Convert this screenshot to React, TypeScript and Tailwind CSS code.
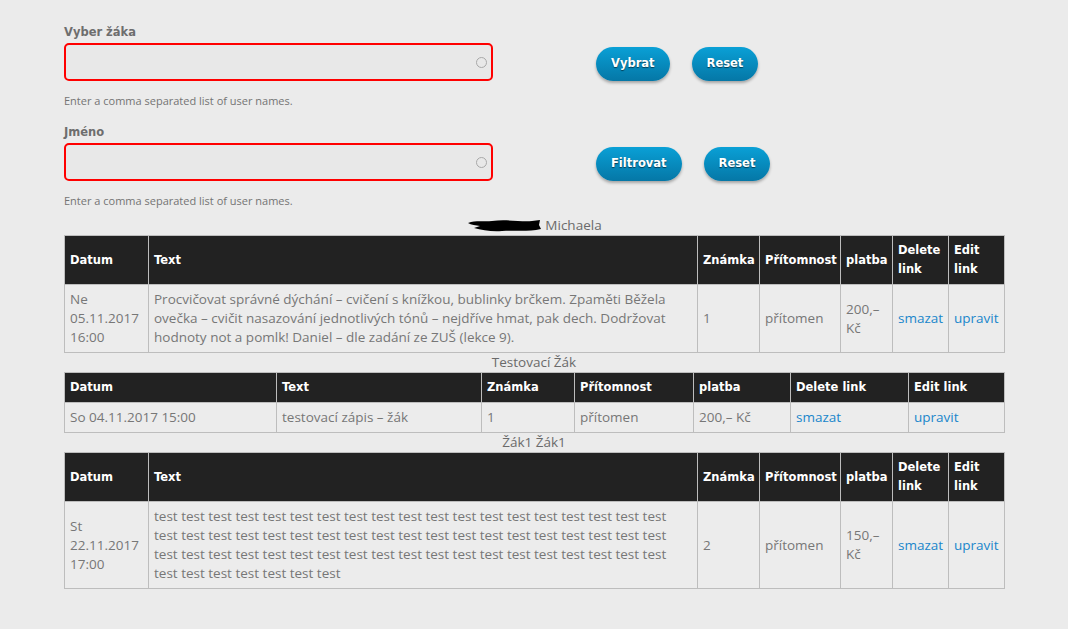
import React from 'react';

const head = "font-['DejaVu_Sans',Verdana,sans-serif] font-bold";
const body = "font-['Open_Sans',sans-serif]";

const cols1 = ['w-[84px]', 'w-[549px]', 'w-[62px]', 'w-[81px]', 'w-[52px]', 'w-[56px]', 'w-[56px]'];
const cols2 = ['w-[212px]', 'w-[205px]', 'w-[93px]', 'w-[119px]', 'w-[97px]', 'w-[118px]', 'w-[96px]'];
const headers = ['Datum', 'Text', 'Známka', 'Přítomnost', 'platba', 'Delete link', 'Edit link'];

const Field = ({ label, buttons }: { label: string; buttons: string[] }) => (
  <div className="flex items-start">
    <div className="w-[429px]">
      <div className={`${head} text-[11.5px] leading-[19px] text-[#6e6e6e]`}>{label}</div>
      <div className="relative mt-px h-[38px] rounded-[5px] border-2 border-[#ff0000] bg-[#e8e8e8]">
        <span className="absolute right-[4px] top-[12px] h-[11px] w-[11px] rounded-full border border-[#a8a8a8]" />
      </div>
      <div className={`${body} mt-[12px] text-[11px] leading-[15px] text-[#747474]`}>Enter a comma separated list of user names.</div>
    </div>
    <div className="ml-[103px] mt-[24px] flex gap-[22px]">
      {buttons.map((b, i) => (
        <button
          key={i}
          className={`${head} h-[34px] rounded-[17px] bg-linear-to-b from-[#0aa0d6] to-[#0577a6] px-[15px] text-[11.5px] text-white shadow-[0_2px_3px_rgba(0,0,0,0.3)] [text-shadow:0_1px_1px_rgba(0,0,0,0.55)]`}
        >
          {b}
        </button>
      ))}
    </div>
  </div>
);

type Row = { date: string; text: string; mark: string; pres: string; pay: string };

const Table = ({ cols, row }: { cols: string[]; row: Row }) => (
  <table className="w-[940px] table-fixed border-collapse border border-[#bdbdbd]">
    <colgroup>
      {cols.map((c, i) => (
        <col key={i} className={c} />
      ))}
    </colgroup>
    <thead>
      <tr className="bg-[#222222]">
        {headers.map((h) => (
          <th key={h} className={`${head} border border-[#bdbdbd] px-[5px] py-[5px] text-left align-middle text-[11.5px] leading-[19px] text-white`}>
            {h}
          </th>
        ))}
      </tr>
    </thead>
    <tbody>
      <tr className={`${body} bg-[#ececec] text-[13.5px] leading-[19px] text-[#777777]`}>
        <td className="border border-[#bdbdbd] px-[5px] py-[5px] align-middle">{row.date}</td>
        <td className="border border-[#bdbdbd] px-[5px] py-[5px] align-middle">{row.text}</td>
        <td className="border border-[#bdbdbd] px-[5px] py-[5px] align-middle">{row.mark}</td>
        <td className="border border-[#bdbdbd] px-[5px] py-[5px] align-middle">{row.pres}</td>
        <td className="border border-[#bdbdbd] px-[5px] py-[5px] align-middle">{row.pay}</td>
        <td className="border border-[#bdbdbd] px-[5px] py-[5px] align-middle text-[#1a86cb]">smazat</td>
        <td className="border border-[#bdbdbd] px-[5px] py-[5px] align-middle text-[#1a86cb]">upravit</td>
      </tr>
    </tbody>
  </table>
);

const Caption = ({ children }: { children: React.ReactNode }) => (
  <div className={`${body} flex h-[19px] items-center justify-center text-[13.5px] leading-[19px] text-[#6a6a6a]`}>{children}</div>
);

export default function App() {
  const tests = Array(64).fill('test').join(' ');
  return (
    <div className="min-h-[629px] w-full bg-[#ebebeb] pl-[64px] pt-[23px]">
      <div className="w-[940px]">
        <Field label="Vyber žáka" buttons={['Vybrat', 'Reset']} />
        <div className="mt-[15px]">
          <Field label="Jméno" buttons={['Filtrovat', 'Reset']} />
        </div>
        <div className="mt-[8px]">
          <Caption>
            <svg width="76" height="18" viewBox="0 0 76 18" className="mr-[3px]">
              <path
                d="M2 6 C10 3 18 5 26 4 C40 2 55 5 66 4 L74 3 L73 8 L75 12 C62 15 48 13 36 14 C26 15 16 13 8 11 L14 9 C10 8 5 8 2 6 Z"
                fill="#000"
              />
            </svg>
            Michaela
          </Caption>
        </div>
        <Table
          cols={cols1}
          row={{
            date: 'Ne 05.11.2017 16:00',
            text: 'Procvičovat správné dýchání – cvičení s knížkou, bublinky brčkem. Zpaměti Běžela ovečka – cvičit nasazování jednotlivých tónů – nejdříve hmat, pak dech. Dodržovat hodnoty not a pomlk! Daniel – dle zadání ze ZUŠ (lekce 9).',
            mark: '1',
            pres: 'přítomen',
            pay: '200,– Kč',
          }}
        />
        <Caption>Testovací Žák</Caption>
        <Table
          cols={cols2}
          row={{ date: 'So 04.11.2017 15:00', text: 'testovací zápis – žák', mark: '1', pres: 'přítomen', pay: '200,– Kč' }}
        />
        <Caption>Žák1 Žák1</Caption>
        <Table
          cols={cols1}
          row={{ date: 'St 22.11.2017 17:00', text: tests, mark: '2', pres: 'přítomen', pay: '150,– Kč' }}
        />
      </div>
    </div>
  );
}
